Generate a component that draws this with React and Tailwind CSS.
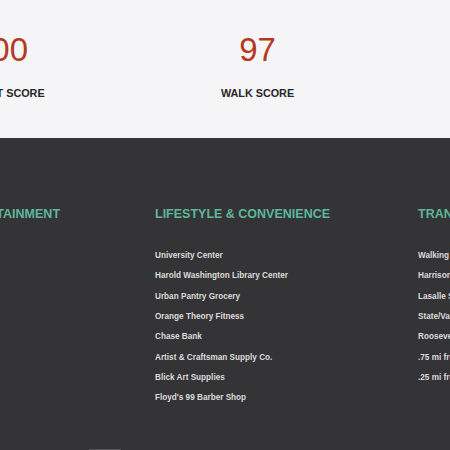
import React from 'react';

const scores = [
  { value: '100', label: 'TRANSIT SCORE' },
  { value: '97', label: 'WALK SCORE' },
  { value: '92', label: 'BIKE SCORE' },
];

const columns = [
  {
    title: 'ENTERTAINMENT',
    width: 'w-[201px]',
    items: [],
  },
  {
    title: 'LIFESTYLE & CONVENIENCE',
    width: 'w-[263px]',
    items: [
      'University Center',
      'Harold Washington Library Center',
      'Urban Pantry Grocery',
      'Orange Theory Fitness',
      'Chase Bank',
      'Artist & Craftsman Supply Co.',
      'Blick Art Supplies',
      "Floyd's 99 Barber Shop",
    ],
  },
  {
    title: 'TRANSPORTATION',
    width: 'w-[263px]',
    items: [
      'Walking distance to the Loop',
      'Harrison Red Line',
      'Lasalle St. Station',
      'State/Van Buren Brown Line',
      'Roosevelt Station',
      '.75 mi from Lake Shore Drive',
      '.25 mi from I-290',
    ],
  },
];

const App = () => {
  return (
    <div className="w-[450px] h-[450px] overflow-hidden bg-[#343335] font-['Liberation_Sans',Arial,sans-serif]">
      {/* scores strip */}
      <div className="h-[138px] bg-[#f5f5f7] pt-[33px]">
        <div className="ml-[-128px] grid w-[771px] grid-cols-3">
          {scores.map((s) => (
            <div key={s.label} className="flex flex-col items-center">
              <span className="text-[33px] leading-[34px] text-[#b5391f]">{s.value}</span>
              <span className="mt-[19px] text-[10.8px] font-bold leading-[14px] text-[#262626]">{s.label}</span>
            </div>
          ))}
        </div>
      </div>

      {/* neighborhood lists */}
      <div className="pt-[68px]">
        <div className="ml-[-46px] flex w-[727px]">
          {columns.map((col) => (
            <div key={col.title} className={`flex shrink-0 flex-col ${col.width}`}>
              <h3 className="whitespace-nowrap text-[12.5px] font-bold leading-[16px] text-[#5db79c]">{col.title}</h3>
              <ul className="mt-[24px] flex flex-col">
                {col.items.map((item) => (
                  <li key={item} className="whitespace-nowrap text-[8.2px] font-bold leading-[20.35px] text-[#dcdcdc]">
                    {item}
                  </li>
                ))}
              </ul>
            </div>
          ))}
        </div>
      </div>

      <div className="ml-[89px] mt-[40px] h-[4px] w-[32px] bg-[#555457]" />
    </div>
  );
};

export default App;
